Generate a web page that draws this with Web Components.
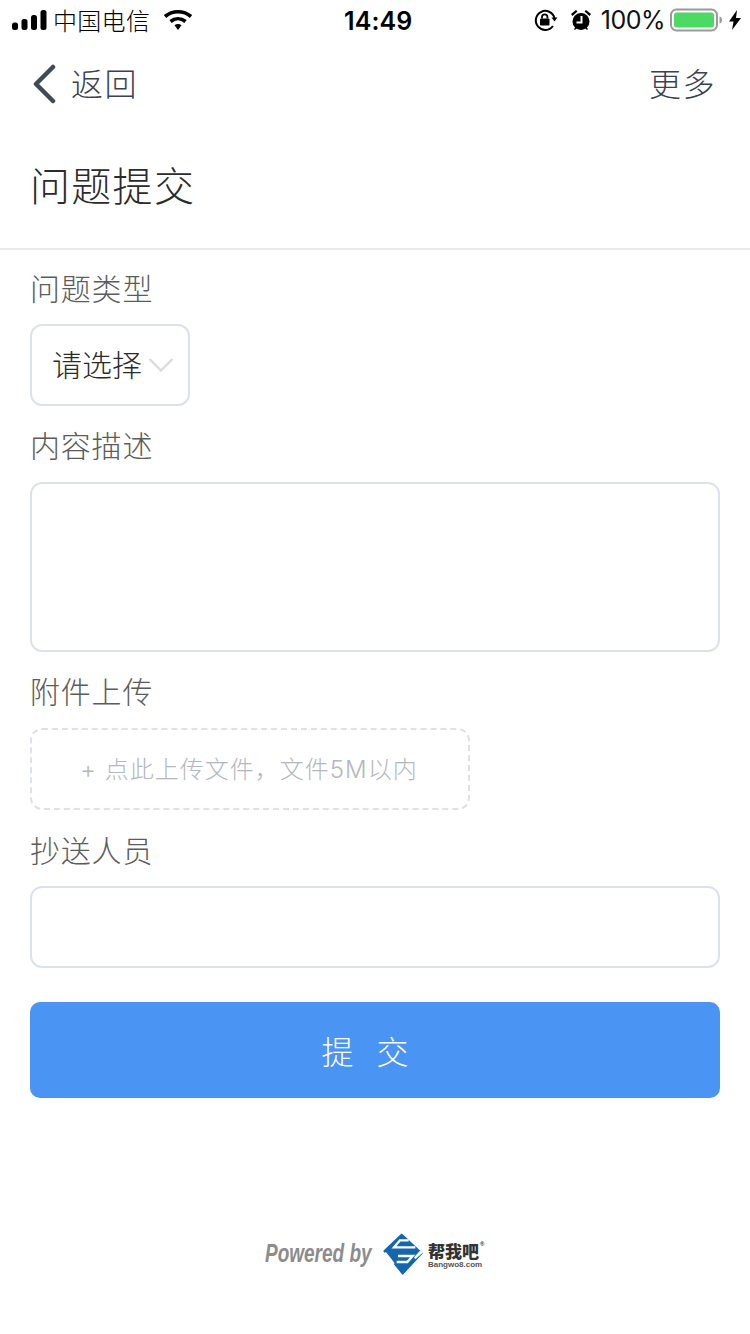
<!DOCTYPE html>
<html lang="zh"><head><meta charset="utf-8">
<style>
html,body{margin:0;padding:0;background:#fff}
body{width:750px;height:1334px;overflow:hidden;font-family:"Noto Sans CJK SC","Liberation Sans",sans-serif}
</style></head><body>
<app-page>
<status-bar></status-bar>
<nav-bar></nav-bar>
<page-title>问题提交</page-title>
<issue-form>
<form-field label="问题类型" style="--h:74px;--lh:75px"><select-box>请选择</select-box></form-field>
<form-field label="内容描述"><text-box h="170"></text-box></form-field>
<form-field label="附件上传"><upload-box>+ 点此上传文件，文件5M以内</upload-box></form-field>
<form-field label="抄送人员" style="--lh:78px"><text-box h="82"></text-box></form-field>
<submit-button>提 交</submit-button>
</issue-form>
<powered-by></powered-by>
</app-page>
<script>
function def(name,css,html,init){
  customElements.define(name,class extends HTMLElement{
    constructor(){super();const s=this.attachShadow({mode:"open"});s.innerHTML='<style>'+css+'</style>'+html;}
    connectedCallback(){if(init)init.call(this,this.shadowRoot);}
  });
}
const CJK='"Noto Sans CJK SC","Liberation Sans",sans-serif';
def('app-page',':host{display:flex;flex-direction:column;width:750px;height:1334px;background:#fff}','<slot></slot>');
def('status-bar',`:host{display:flex;align-items:center;justify-content:space-between;height:40px;padding:0 12px;box-sizing:border-box;color:#000;font-family:${CJK};position:relative}
.l,.r{display:flex;align-items:center}
.c{position:absolute;left:344px;top:0;font:600 25px/42px "Inter","Liberation Sans",sans-serif;letter-spacing:.1px}
.carrier{font-size:24px;font-weight:300;line-height:40px;margin-left:5px;letter-spacing:.3px;color:#000}
.pct{font:400 25px/42px "Inter","Liberation Sans",sans-serif;margin:0 5px 0 9px;letter-spacing:-.5px;color:#111}
svg{display:block}`,
`<div class="l"><svg width="36" height="20" viewBox="0 0 36 20"><rect x="0" y="12.5" width="6" height="7.5" rx="2.5"/><rect x="9.5" y="9" width="6" height="11" rx="2.5"/><rect x="19" y="5" width="6" height="15" rx="2.5"/><rect x="28.5" y="0" width="6" height="20" rx="2.5"/></svg>
<span class="carrier">中国电信</span>
<svg style="margin-left:13px" width="30" height="22" viewBox="0 0 30 22"><path d="M2 7.5C9.5 1.2 20.5 1.2 28 7.500" fill="none" stroke="#000" stroke-width="3.600"/><path d="M7.500 12.500C12 8.800 18 8.800 22.500 12.500" fill="none" stroke="#000" stroke-width="3.600"/><path d="M11.500 16.300C13.600 14.500 16.400 14.500 18.500 16.300L15 21Z"/></svg></div>
<div class="c">14:49</div>
<div class="r" style="margin-right:-3px">
<svg width="24" height="24" viewBox="0 0 24 24"><path d="M20.500 10A9.500 9.500 0 1 0 19 18" fill="none" stroke="#000" stroke-width="2"/><path d="M17.500 9.500h6l-3 4z"/><rect x="6" y="10.500" width="9.500" height="7" rx="1"/><path d="M8 10.500V9a2.700 2.700 0 0 1 5.400 0v1.500" fill="none" stroke="#000" stroke-width="1.800"/></svg>
<svg style="margin-left:12px" width="22" height="24" viewBox="0 0 22 24"><circle cx="11" cy="13.500" r="8.500"/><path d="M11.500 8v6.500H6.500" fill="none" stroke="#fff" stroke-width="2"/><path d="M1 6l5-4 1.500 1.500L2.500 8zM21 6l-5-4-1.500 1.500L19.500 8zM4 21l2-2 1 1-2 2zM18 21l-2-2-1 1 2 2z"/></svg>
<span class="pct">100%</span>
<svg width="56" height="24" viewBox="0 0 56 24"><rect x="1" y="1.500" width="46" height="21" rx="5.500" fill="none" stroke="#9a9a9a" stroke-width="2"/><rect x="4" y="4.500" width="40" height="15" rx="3" fill="#4cd964"/><path d="M49.500 8.500c2 .5 2.500 2 2.500 3.500s-.5 3-2.500 3.500z" fill="#9a9a9a"/></svg>
<svg style="margin-left:3px" width="12" height="20" viewBox="0 0 12 20"><path d="M8 0L0 11.500h4.500L3 20l9-12H7z"/></svg>
</div>`);
def('nav-bar',`:host{display:flex;align-items:center;justify-content:space-between;height:88px;padding:0 34px 0 30px;box-sizing:border-box;font-family:${CJK};font-size:32px;font-weight:300;letter-spacing:1.500px;color:#39434f}
.b{display:flex;align-items:center;gap:13px}svg{display:block}span{line-height:84px;height:88px}`,
`<div class="b"><svg width="28" height="40" viewBox="0 0 28 40"><path d="M23 3L6 20l17 17" fill="none" stroke="#3f4a5a" stroke-width="4.500" stroke-linecap="round" stroke-linejoin="round"/></svg><span>返回</span></div><span>更多</span>`);
def('page-title',`:host{display:block;height:122px;box-sizing:border-box;padding:0 30px;border-bottom:2px solid #e8eaec;font:300 40px/112px ${CJK};letter-spacing:1.300px;color:#2b2b2b}`,'<slot></slot>');
def('issue-form',`:host{display:block;padding:0 30px}`,'<slot></slot>');
def('form-field',`:host{display:block}
.lb{height:var(--h,76px);font:300 30px/var(--lh,76px) ${CJK};letter-spacing:.8px;color:#5c5c5c}`,
`<div class="lb"></div><slot></slot>`,function(s){s.querySelector('.lb').textContent=this.getAttribute('label')});
def('select-box',`:host{display:flex;align-items:center;width:160px;height:82px;box-sizing:border-box;border:2px solid #dde1ea;border-radius:12px;padding:0 0 4px 20px;font:300 30px/72px ${CJK};color:#2b2b2b;white-space:nowrap}
svg{display:block;margin:4px 0 0 6px;flex:none}`,
`<slot></slot><svg width="26" height="16" viewBox="0 0 26 16"><path d="M1.500 2L13 13.500 24.500 2" fill="none" stroke="#d8dbe0" stroke-width="2.400"/></svg>`);
def('text-box',`:host{display:block;box-sizing:border-box;border:2px solid #dde1ea;border-radius:12px;background:#fff}`,'',function(){this.style.height=this.getAttribute('h')+'px'});
def('upload-box',`:host{display:flex;align-items:center;justify-content:center;width:440px;height:82px;box-sizing:border-box;border:2px dashed #dde1ea;border-radius:12px;padding:2px 2px 0 0;font:300 24px/76px "Inter","Noto Sans CJK SC",sans-serif;letter-spacing:1px;color:#b4b7bd;white-space:nowrap}`,'<slot></slot>');
def('submit-button',`:host{display:flex;align-items:center;justify-content:center;height:96px;margin-top:34px;padding-right:20px;box-sizing:border-box;background:#4a95f3;border-radius:10px;color:#fff;font:300 32px/96px ${CJK};white-space:pre;word-spacing:16px}`,'<slot></slot>');
def('powered-by',`:host{display:flex;align-items:center;justify-content:center;margin-top:126px;height:60px;box-sizing:border-box}
.p{font:italic 700 25px/1 "Liberation Sans",sans-serif;color:#8c8c8c;transform:scaleX(.76);transform-origin:left center;width:106px;white-space:nowrap;margin-bottom:2px}
svg{display:block;margin-left:7px}
.b{display:flex;flex-direction:column;color:#333;width:57px;padding-top:2px}
.t{font:900 17px/20px ${CJK};position:relative;white-space:nowrap}
.t sup{position:absolute;left:52px;top:0;font:700 6px/6px "Liberation Sans",sans-serif}
.u{font:700 8px/8px "Liberation Sans",sans-serif;color:#555;white-space:nowrap}`,
`<span class="p">Powered by</span>
<svg width="50" height="48" viewBox="0 0 150 144"><path d="M71 13L132 70 74 132 18 63Z" fill="#1467ad" stroke="#1467ad" stroke-width="4" stroke-linejoin="round"/><path d="M92 31H66L48 52H112M56 96H88L104 78H60" fill="none" stroke="#fff" stroke-width="7"/><path d="M14 72L42 106 50 100 24 66ZM126 62L108 82 112 88 134 68Z" fill="#fff"/></svg>
<div class="b"><div class="t">帮我吧<sup>®</sup></div><div class="u">Bangwo8.com</div></div>`);
</script>
</body></html>
